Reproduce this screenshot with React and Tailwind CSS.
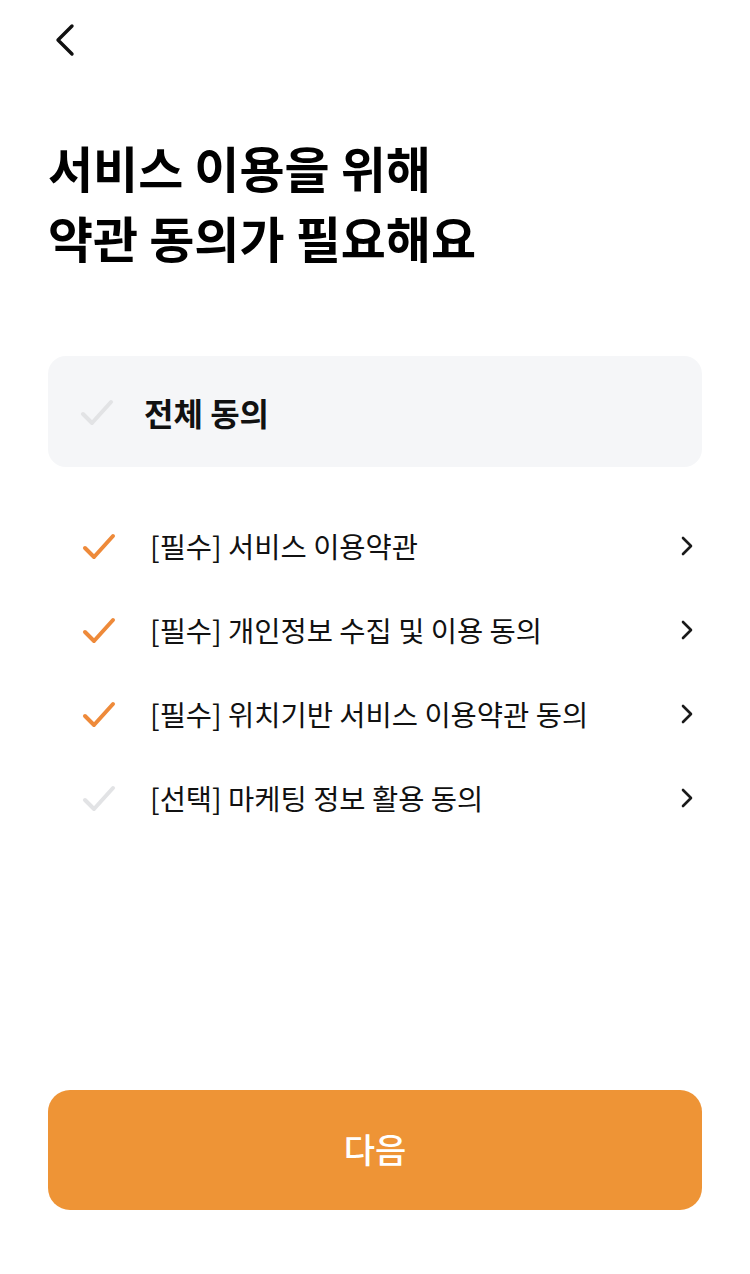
import React from "react";

const font = { fontFamily: '"Noto Sans CJK KR", "Noto Sans", sans-serif' };

function Check({ on }) {
  return (
    <svg width="34" height="30" viewBox="0 0 34 30" fill="none">
      <path d="M3 17 L12 26 L31 5" stroke={on ? "#EE8A3A" : "#E2E3E5"} strokeWidth="4" strokeLinecap="round" strokeLinejoin="round" />
    </svg>
  );
}

function Chevron() {
  return (
    <svg width="14" height="22" viewBox="0 0 14 22" fill="none">
      <path d="M3 3 L11 11 L3 19" stroke="#1a1a1a" strokeWidth="2.6" strokeLinecap="round" strokeLinejoin="round" />
    </svg>
  );
}

const items = [
  { on: true, label: "[필수] 서비스 이용약관" },
  { on: true, label: "[필수] 개인정보 수집 및 이용 동의" },
  { on: true, label: "[필수] 위치기반 서비스 이용약관 동의" },
  { on: false, label: "[선택] 마케팅 정보 활용 동의" },
];

export default function App() {
  return (
    <div className="w-[750px] h-[1274px] bg-white flex flex-col" style={font}>
      <div className="h-[80px] flex items-center pl-[52px]">
        <svg width="26" height="36" viewBox="0 0 26 36" fill="none">
          <path d="M20 4 L6 18 L20 32" stroke="#111" strokeWidth="3.4" strokeLinecap="round" strokeLinejoin="round" />
        </svg>
      </div>
      <h1 className="px-12 mt-[52px] text-[49px] leading-[70px] font-bold text-black">
        서비스 이용을 위해
        <br />
        약관 동의가 필요해요
      </h1>
      <div className="mx-12 mt-[84px] h-[111px] rounded-[18px] bg-[#F5F6F8] flex items-center pl-[32px]">
        <Check on={false} />
        <span className="ml-[30px] text-[32px] font-bold text-[#111]">전체 동의</span>
      </div>
      <div className="mt-[37px] flex flex-col">
        {items.map((it, i) => (
          <div key={i} className="h-[84px] flex items-center pl-[82px] pr-[56px]">
            <Check on={it.on} />
            <span className="ml-[34px] flex-1 text-[28.5px] text-[#111]">{it.label}</span>
            <Chevron />
          </div>
        ))}
      </div>
      <div className="flex-1" />
      <button className="mx-12 mb-[64px] h-[120px] rounded-[22px] bg-[#EE9436] text-white text-[34px] font-medium pb-[4px]">
        다음
      </button>
    </div>
  );
}
